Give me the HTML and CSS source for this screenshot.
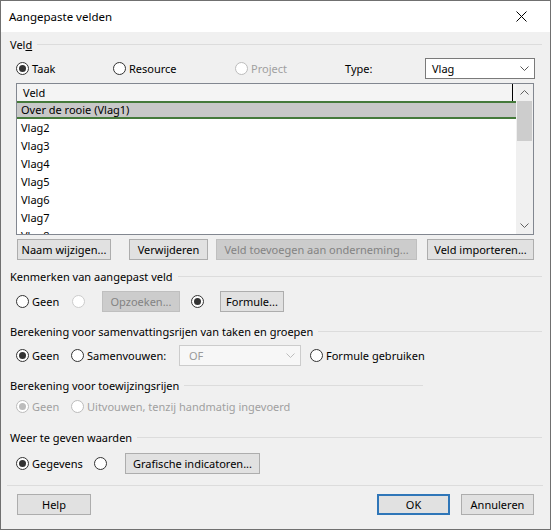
FILE: index.html
```html
<!DOCTYPE html>
<html lang="nl">
<head>
    <meta charset="UTF-8">
    <title>Aangepaste velden</title>
    <link rel="stylesheet" href="styles.css">
</head>
<body>
<div class="dialog">
    <div class="titlebar">
        <span class="title">Aangepaste velden</span>
        <svg class="close" width="11" height="11" viewBox="0 0 11 11"><path d="M0.5 0.5L10.5 10.5M10.5 0.5L0.5 10.5" stroke="#000" stroke-width="1" fill="none"/></svg>
    </div>

    <div class="content">
        <div class="group-label"><span>Vel<u>d</u></span></div>
        <div class="row row-type">
            <label class="opt"><span class="radio checked"></span>Taak</label>
            <label class="opt"><span class="radio"></span>Resource</label>
            <label class="opt disabled"><span class="radio"></span>Project</label>
            <span class="type-label">Type:</span>
            <div class="combo combo-type">
                <span>Vlag</span>
                <svg class="chev" width="9" height="5" viewBox="0 0 9 5"><path d="M0.5 0.5L4.5 4.5L8.5 0.5" stroke="#555" fill="none"/></svg>
            </div>
        </div>

        <div class="list">
            <div class="list-main">
                <div class="list-header"><span class="hdr-cell">Veld</span></div>
                <div class="list-row selected">Over de rooie (Vlag1)</div>
                <div class="list-row">Vlag2</div>
                <div class="list-row">Vlag3</div>
                <div class="list-row">Vlag4</div>
                <div class="list-row">Vlag5</div>
                <div class="list-row">Vlag6</div>
                <div class="list-row">Vlag7</div>
                <div class="list-row">Vlag8</div>
            </div>
            <div class="scrollbar">
                <div class="sb-arrow">
                    <svg width="9" height="5" viewBox="0 0 9 5"><path d="M0.5 4.5L4.5 0.5L8.5 4.5" stroke="#606060" fill="none"/></svg>
                </div>
                <div class="sb-thumb"></div>
                <div class="sb-track"></div>
                <div class="sb-arrow">
                    <svg width="9" height="5" viewBox="0 0 9 5"><path d="M0.5 0.5L4.5 4.5L8.5 0.5" stroke="#606060" fill="none"/></svg>
                </div>
            </div>
        </div>

        <div class="row row-listbtns">
            <button class="btn btn-rename">Naam wijzigen...</button>
            <button class="btn btn-delete">Verwijderen</button>
            <button class="btn btn-enterprise" disabled>Veld toevoegen aan onderneming...</button>
            <button class="btn btn-import">Veld importeren...</button>
        </div>

        <div class="group-label gl-kenmerk"><span>Kenmerken van aangepast veld</span></div>
        <div class="row row-kenmerk">
            <label class="opt"><span class="radio"></span>Geen</label>
            <label class="opt disabled"><span class="radio light"></span></label>
            <button class="btn btn-lookup" disabled>Opzoeken...</button>
            <label class="opt"><span class="radio checked"></span></label>
            <button class="btn btn-formula">Formule...</button>
        </div>

        <div class="group-label gl-summary"><span>Berekening voor samenvattingsrijen van taken en groepen</span></div>
        <div class="row row-summary">
            <label class="opt"><span class="radio checked"></span>Geen</label>
            <label class="opt"><span class="radio"></span>Samenvouwen:</label>
            <div class="combo combo-of">
                <span>OF</span>
                <svg class="chev" width="9" height="5" viewBox="0 0 9 5"><path d="M0.5 0.5L4.5 4.5L8.5 0.5" stroke="#bdbdbd" fill="none"/></svg>
            </div>
            <label class="opt"><span class="radio"></span>Formule gebruiken</label>
        </div>

        <div class="group-label gl-assign short"><span>Berekening voor toewijzingsrijen</span></div>
        <div class="row row-assign">
            <label class="opt disabled"><span class="radio checked"></span>Geen</label>
            <label class="opt disabled"><span class="radio"></span>Uitvouwen, tenzij handmatig ingevoerd</label>
        </div>

        <div class="group-label gl-values"><span>Weer te geven waarden</span></div>
        <div class="row row-values">
            <label class="opt"><span class="radio checked"></span>Gegevens</label>
            <label class="opt"><span class="radio"></span></label>
            <button class="btn btn-graphic">Grafische indicatoren...</button>
        </div>

        <div class="separator"></div>

        <div class="row footer">
            <button class="btn btn-help">Help</button>
            <button class="btn btn-ok">OK</button>
            <button class="btn btn-cancel">Annuleren</button>
        </div>
    </div>
</div>
</body>
</html>
```

FILE: styles.css
```css
body {
    margin: 0;
    font-family: "Noto Sans", "Open Sans", sans-serif;
    font-size: 11px;
    color: #000;
}
.dialog {
    width: 551px;
    height: 530px;
    box-sizing: border-box;
    border: 1px solid #707070;
    background-color: #f0f0f0;
}
.titlebar {
    height: 31px;
    background-color: #fff;
    display: flex;
    align-items: center;
    padding-left: 8px;
}
.title {
    flex: 1;
    font-size: 11.5px;
}
.close {
    margin-right: 23px;
}
.content {
    padding: 0 16px 0 15px;
}

/* Group captions with a rule after them */
.group-label {
    display: flex;
    align-items: center;
    height: 16px;
    line-height: 16px;
    margin: 5px -8px 0 -6px;
}
.group-label::after {
    content: "";
    flex: 1;
    height: 1px;
    margin: -2px 0 0 5px;
    background-color: #dcdcdc;
}
.group-label.short {
    margin-right: 111px;
}
.gl-kenmerk { margin-top: 9px; }
.gl-summary { margin-top: 12px; }
.gl-assign { margin-top: 12px; }
.gl-values { margin-top: 13px; }

.row {
    height: 21px;
    display: grid;
    align-items: center;
}
.opt {
    display: flex;
    align-items: center;
    white-space: nowrap;
}
.opt.disabled {
    color: #a0a0a0;
}
.radio {
    width: 13px;
    height: 13px;
    box-sizing: border-box;
    border: 1px solid #333;
    border-radius: 50%;
    background-color: #fff;
    position: relative;
    margin-right: 3px;
    flex: none;
}
.radio.checked::after {
    content: "";
    position: absolute;
    left: 2px;
    top: 2px;
    width: 7px;
    height: 7px;
    border-radius: 50%;
    background-color: #333;
}
.disabled .radio {
    border-color: #bcbcbc;
}
.disabled .radio.checked::after {
    background-color: #bcbcbc;
}
.radio.light {
    border-color: #cccccc;
}

.row-type {
    margin-top: 5px;
    grid-template-columns: 97px 122px 110px 80px 109px;
}
.combo {
    height: 21px;
    box-sizing: border-box;
    border: 1px solid #7a7a7a;
    background-color: #fff;
    display: flex;
    align-items: center;
    justify-content: space-between;
    padding: 0 5px 0 6px;
}
.combo-type {
    width: 110px;
}
.combo-of {
    width: 122px;
    border-color: #cccccc;
    background-color: #f7f7f7;
    color: #9a9a9a;
    padding-left: 9px;
}

/* Field list */
.list {
    margin-top: 4px;
    height: 152px;
    box-sizing: border-box;
    border: 1px solid #828790;
    background-color: #fff;
    display: flex;
    overflow: hidden;
}
.list-main {
    flex: 1;
    overflow: hidden;
}
.list-header {
    height: 17px;
    background-color: #f4f4f4;
    display: flex;
}
.hdr-cell {
    width: 496px;
    box-sizing: border-box;
    border-right: 1px solid #000;
    padding-left: 6px;
    line-height: 18px;
}
.list-row {
    height: 18px;
    line-height: 18px;
    padding-left: 4px;
    box-sizing: border-box;
}
.list-row.selected {
    background-color: #c8c8c8;
    border-top: 2px solid #457a3b;
    border-bottom: 2px solid #457a3b;
    line-height: 14px;
}
.scrollbar {
    width: 17px;
    background-color: #f0f0f0;
    display: flex;
    flex-direction: column;
}
.sb-arrow {
    height: 17px;
    display: flex;
    align-items: center;
    justify-content: center;
}
.sb-thumb {
    height: 40px;
    margin: 0 1px;
    background-color: #cdcdcd;
}
.sb-track {
    flex: 1;
}

/* Buttons */
.btn {
    height: 21px;
    box-sizing: border-box;
    border: 1px solid #adadad;
    background-color: #e1e1e1;
    font-family: inherit;
    font-size: 11px;
    color: #000;
    padding: 0;
    white-space: nowrap;
}
.btn:disabled {
    background-color: #cccccc;
    border-color: #bfbfbf;
    color: #838383;
}
.row-listbtns {
    margin-top: 4px;
    grid-template-columns: 112px 87px 211px 107px;
    padding-left: 1px;
}
.btn-rename { width: 94px; }
.btn-delete { width: 79px; }
.btn-enterprise { width: 201px; }
.btn-import { width: 107px; }

.row-kenmerk {
    margin-top: 6px;
    grid-template-columns: 56px 30px 89px 29px auto;
}
.btn-lookup { width: 78px; }
.btn-formula { width: 64px; }

.row-summary {
    margin-top: 5px;
    grid-template-columns: 55px 108px 131px auto;
}
.row-assign {
    margin-top: 2px;
    grid-template-columns: 55px auto;
}
.row-values {
    margin-top: 7px;
    grid-template-columns: 78px 31px auto;
}
.btn-graphic { width: 135px; }

.separator {
    height: 1px;
    margin: 11px -9px 0 -9px;
    background-color: #dcdcdc;
}
.footer {
    margin-top: 8px;
    display: flex;
    padding-left: 1px;
}
.btn-help { width: 74px; }
.btn-ok {
    width: 73px;
    margin-left: auto;
    border: 2px solid #2f76b8;
}
.btn-cancel {
    width: 73px;
    margin-left: 11px;
}
```
